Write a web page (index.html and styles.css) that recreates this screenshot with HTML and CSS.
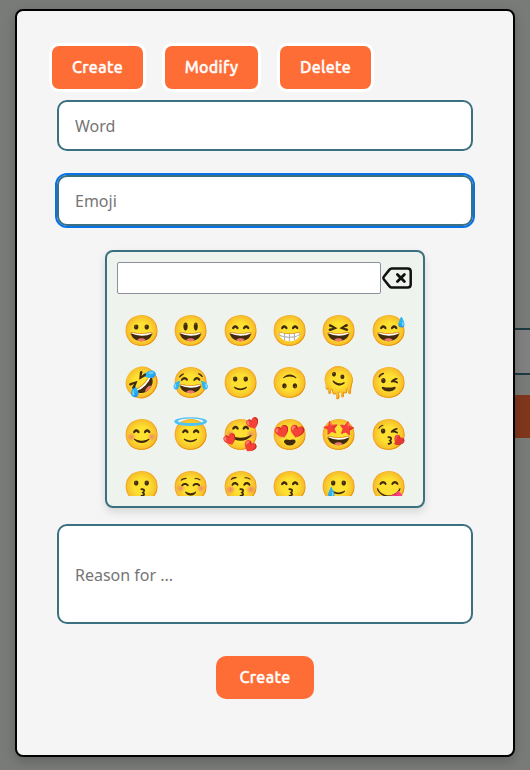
FILE: index.html
```html
<!DOCTYPE html>
<html lang="en">
<head>
<meta charset="utf-8">
<title>Create word</title>
<link rel="stylesheet" href="styles.css">
</head>
<body>
<div class="backdrop"><div class="page-input"></div><div class="page-button"></div></div>
<main class="dialog">
  <nav class="tabs">
    <button class="btn tab create">Create</button>
    <button class="btn tab modify">Modify</button>
    <button class="btn tab delete">Delete</button>
  </nav>
  <form class="form">
    <input class="field" placeholder="Word">
    <input class="field focused" placeholder="Emoji">
    <section class="picker">
      <div class="search-row">
        <input class="search" aria-label="Search">
        <svg class="backspace" viewBox="0 0 32 32" fill="none" stroke="#111" stroke-linejoin="round" stroke-linecap="round"><path stroke-width="2.5" d="M10.8 6.4H26.7Q29.7 6.4 29.7 9.4V22.6Q29.7 25.6 26.7 25.6H10.8Q9.5 25.6 8.5 24.4L2.8 17.3Q1.9 16 2.8 14.7L8.5 7.6Q9.5 6.4 10.8 6.4Z"/><path stroke-width="2.8" d="M16.4 12.5 23.4 19.5M23.4 12.5 16.4 19.5"/></svg>
      </div>
      <div class="emojis">
        <span>😀</span><span>😃</span><span>😄</span><span>😁</span><span>😆</span><span>😅</span>
        <span>🤣</span><span>😂</span><span>🙂</span><span>🙃</span><span>🫠</span><span>😉</span>
        <span>😊</span><span>😇</span><span>🥰</span><span>😍</span><span>🤩</span><span>😘</span>
        <span>😗</span><span>☺️</span><span>😚</span><span>😙</span><span>🥲</span><span>😋</span>
      </div>
    </section>
    <input class="field reason" placeholder="Reason for ...">
    <button class="btn submit" type="button">Create</button>
  </form>
</main>
</body>
</html>
```
FILE: styles.css
```css
* { box-sizing: border-box; }
body {
  margin: 0;
  height: 770px;
  overflow: hidden;
  background: #787b77;
  font-family: "Noto Sans", sans-serif;
}
.backdrop {
  position: absolute;
  top: 328px;
  right: 0;
  width: 30px;
}
.page-input {
  height: 47px;
  background: #808080;
  border: solid #1d3942;
  border-width: 2px 0;
}
.page-button {
  height: 43px;
  margin-top: 20px;
  background: #80361b;
}
.dialog {
  position: relative;
  width: 500px;
  height: 748px;
  margin: 9px auto 0 15px;
  padding: 32px;
  background: #f5f5f5;
  border: 2px solid #000;
  border-radius: 8px;
  box-shadow: 0 4px 12px rgba(0, 0, 0, .2);
}
.tabs {
  display: flex;
  gap: 16px;
}
.btn {
  height: 43px;
  padding: 0;
  border: 0;
  background: #ff6d36;
  color: #fff;
  font: 500 16px/43px Ubuntu, "Noto Sans", sans-serif;
  letter-spacing: .3px;
  -webkit-text-stroke: .4px #fff;
  white-space: nowrap;
}
.tab {
  box-sizing: content-box;
  border: 3px solid #fff;
  border-radius: 10px;
}
.create { width: 91px; }
.modify { width: 93px; }
.delete { width: 91px; }
.form {
  display: flex;
  flex-direction: column;
  align-items: center;
  margin-top: 8px;
}
.field {
  width: 416px;
  height: 51px;
  margin-bottom: 24px;
  padding: 0 16px;
  background: #fff;
  border: 2px solid #3a7080;
  border-radius: 10px;
  font: 16px "Noto Sans", sans-serif;
}
.field::placeholder { color: #757575; }
.focused { outline: 2px solid #0873e6; }
.picker {
  width: 320px;
  height: 258px;
  margin-bottom: 16px;
  padding: 10px;
  background: #eef3ed;
  border: 2px solid #3a7080;
  border-radius: 8px;
  box-shadow: 0 4px 8px rgba(0, 0, 0, .12);
}
.search-row {
  display: flex;
  height: 32px;
}
.search {
  width: 264px;
  height: 32px;
  background: #fff;
  border: 1px solid #8f8f9d;
  border-radius: 2px;
}
.backspace {
  width: 32px;
  height: 32px;
}
.emojis {
  display: grid;
  grid-template-columns: repeat(6, 1fr);
  grid-auto-rows: 52px;
  height: 191px;
  margin-top: 11px;
  overflow: hidden;
}
.emojis span {
  display: flex;
  justify-content: center;
  padding-left: 1px;
  font: 30px/52px "Noto Color Emoji", "Noto Sans", sans-serif;
}
.reason {
  height: 100px;
  margin-bottom: 32px;
  padding-top: 2px;
}
.submit {
  width: 98px;
  border-radius: 10px;
}
```
